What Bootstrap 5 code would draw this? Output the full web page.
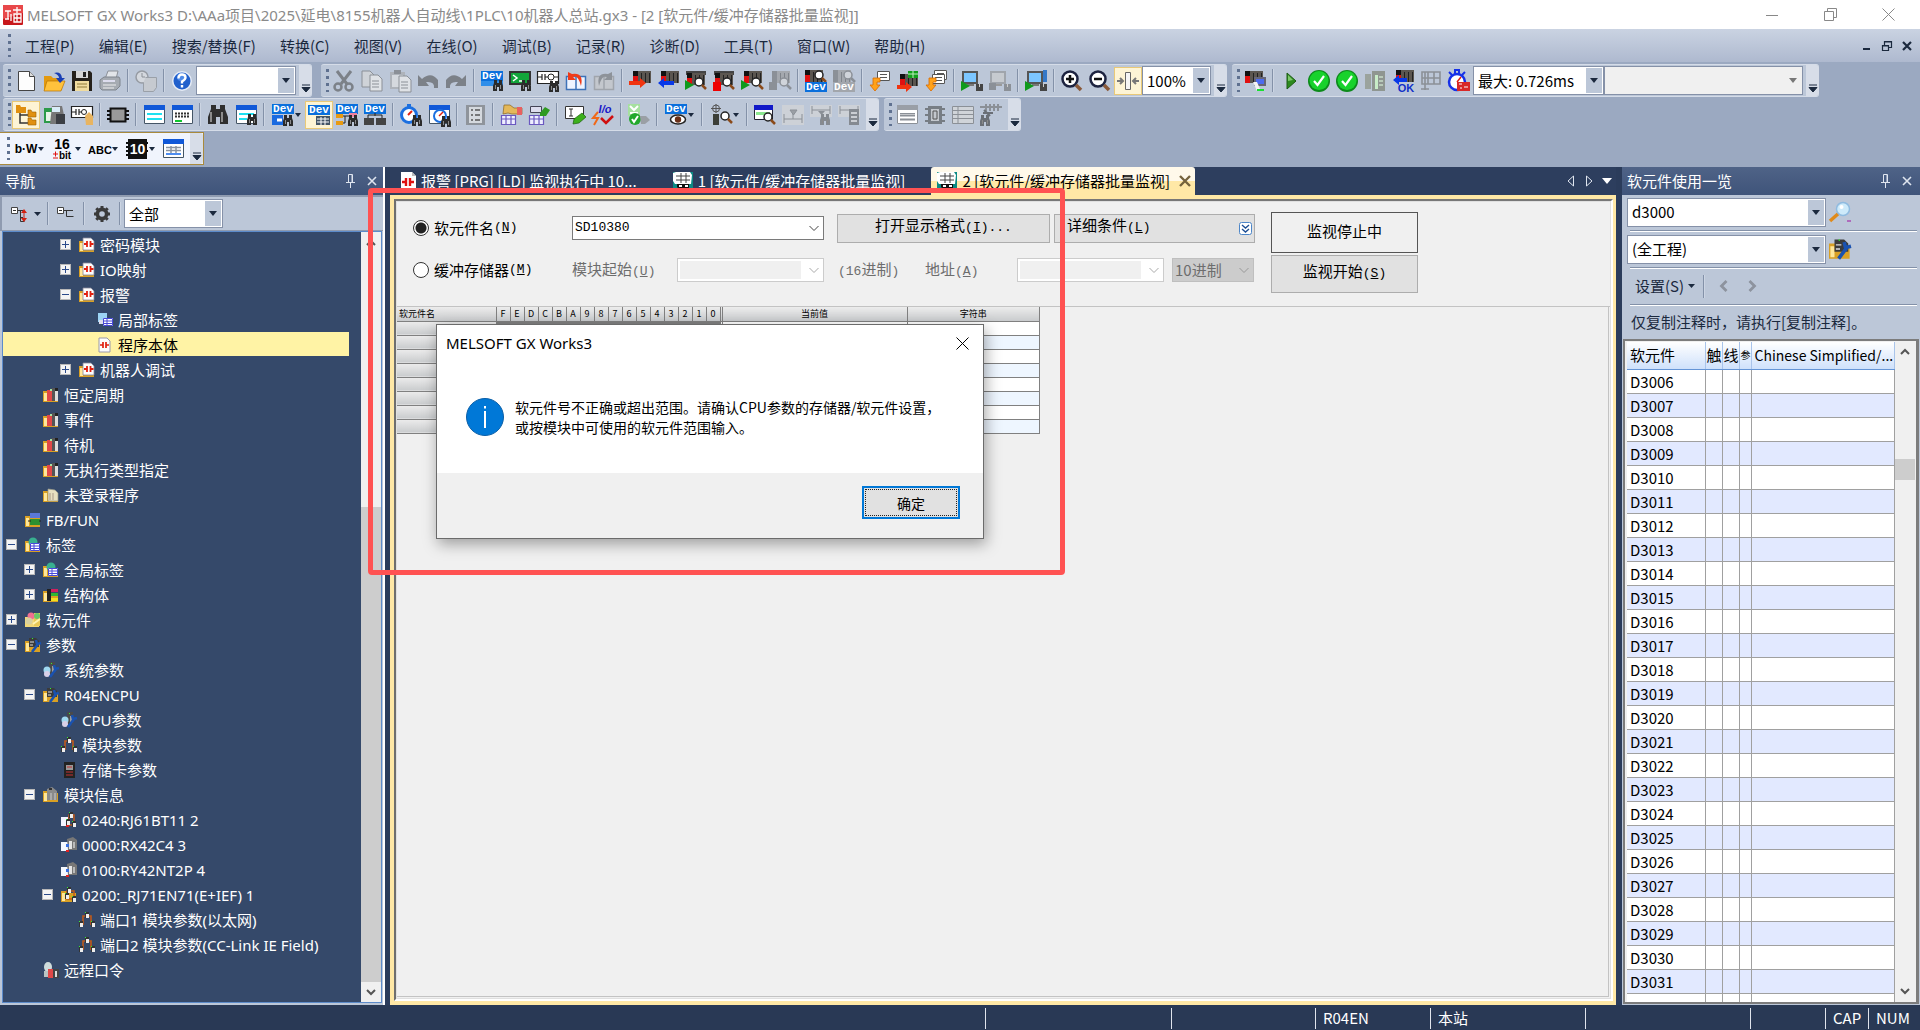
<!DOCTYPE html>
<html lang="zh-CN">
<head>
<meta charset="utf-8">
<meta name="viewport" content="width=device-width, initial-scale=1">
<title>MELSOFT GX Works3</title>
<link href="https://cdn.jsdelivr.net/npm/bootstrap@5.3.0/dist/css/bootstrap.min.css" rel="stylesheet">
<style>
:root{--bar:#bcc7d8;--desk:#9ba9c1;--navy:#2b3c5b;--tree:#35496a;--ink:#1b293e;--cream:#ffe8a6}
*{border-radius:0}
body{font-family:"Noto Sans CJK SC","Noto Sans",sans-serif;font-size:15px;line-height:20px;color:#000;background:var(--navy);height:100vh;overflow:hidden}
button,select,input{font:inherit;color:inherit}
button{border:0;background:none;padding:0}
svg{display:block;flex:none;overflow:visible}
.ui{font-family:"Noto Sans","Noto Sans CJK SC",sans-serif}
.mn{font-family:"Liberation Mono",monospace;font-size:13px}
.titlebar{height:29px;background:#fff;color:#8a8a8a;padding:0 3px}
.capbtn{width:58px;height:29px;display:flex;align-items:center;justify-content:center}
.menubar{height:34px;background:linear-gradient(#cad3e2,#aeb9cf);color:var(--ink);padding:0 3px 0 5px}
.menubar a{color:var(--ink);text-decoration:none;padding:0 12px;white-space:nowrap}
.mdibtn{width:20px;height:20px;display:flex;align-items:center;justify-content:center}
.grip{width:3px;height:23px;margin:0 1px 0 5px;flex:none;background:repeating-linear-gradient(#5f7190 0 3px,transparent 3px 7px)}
.menubar .grip{margin:0 2px 0 3px}
.bars{background:var(--desk);padding:2px 0}
.barrow{height:34px;padding-left:3px;gap:5px}
#row1 .tbar:first-child{margin-right:4px}
.tbar{display:flex;align-items:center;height:33px;background:var(--bar);border-top:1px solid #d5dce8;border-bottom:1px solid #d5dce8;border-radius:3px;color:var(--ink);flex:none}
.tbar.hot{background:#f0f4fd;border:1px solid #a98a3c;border-left:0;border-radius:0;padding-left:2px}
.tb{width:28px;height:28px;display:flex;align-items:center;justify-content:center;flex:none}
.tb.dd{width:37px;gap:1px}
.tb.on{background:#fdf4d5;border:1px solid #e9c978}
.sp{width:2px;height:23px;margin:0 3px;background:linear-gradient(90deg,#8391a8 1px,#ccd5e3 1px);flex:none}
.cap{width:13px;align-self:stretch;margin-left:3px;background:#d7dde8;border-radius:0 3px 3px 0;display:flex;align-items:flex-end;justify-content:center;padding-bottom:3px}
.cmb{display:flex;height:29px;border:1px solid #8591a8;background:#fff;color:#000;flex:none}
.cmb select{border:0;outline:0;appearance:none;background:transparent;flex:1 1 0;min-width:0;padding:0 4px;line-height:20px;opacity:1}
.cmb i{width:16px;margin:1px;background:var(--bar);display:flex;align-items:center;justify-content:center}
.cmb.off{background:#f0f0f0}.cmb.off i{background:none}
.w100{width:100px}.w70{width:69px}.w131{width:131px}.w199{width:199px}.w98{width:99px}
.work{background:var(--navy);min-height:0}
.phead{height:28px;background:linear-gradient(#4f6387,#3f547a);color:#fff;padding:0 2px 0 5px}
.navp .phead{padding-right:0}
.pbtn{width:22px;height:20px;display:flex;align-items:center;justify-content:center}
.tabs .pbtn{width:18px}
.navp{width:385px;flex:none;border-right:2px solid #fff;background:var(--bar)}
.navtool{height:36px;background:var(--bar);border:2px solid #8f9bb0;border-width:2px 0 1px 2px;padding-left:5px}
.treebox{border:1px solid #5c8bca;margin:0 1px 2px 2px;background:var(--tree);min-height:0}
.tree{margin:0;padding:0;list-style:none;color:#fff;overflow:hidden}
.tree li{height:25px;display:flex;align-items:center;white-space:nowrap;padding-left:3px}
.tree li.sel{background:linear-gradient(#fff3a5 24px,transparent 24px);color:#000;margin-right:12px}
.lv1{margin-left:18px}.lv2{margin-left:36px}.lv3{margin-left:54px}.lv4{margin-left:72px}
.exb{width:11px;height:11px;flex:none;margin-right:8px;background:#f4f4f4;border:1px solid #b8b8b8;display:flex;align-items:center;justify-content:center}
.exb.none{visibility:hidden}
.tree li>svg{margin-right:5px}
.vsb{width:20px;background:#f0f0f0;flex:none;display:flex;flex-direction:column;align-items:center}
.vsb button{width:20px;height:20px;display:flex;align-items:center;justify-content:center}
.thumbbar{width:20px;background:#cdcdcd}
.f254{flex:254}.f475{flex:475}.f98{flex:98}.f21{flex:21}.f498{flex:504}
.mdi{margin:0 6px 0 5px;min-width:0}
.tabs{height:28px;background:#2d3e5e;color:#fff;padding-left:7px}
.dtab{display:flex;align-items:center;height:28px;white-space:nowrap;color:#fff;text-decoration:none;gap:5px;overflow:hidden}
.tabgap{width:36px;flex:none}.tabgap.end{width:26px}
.dtab.cur{background:linear-gradient(#fff9ea 50%,#ffe8a6 50%);color:#000;border-radius:3px 3px 0 0;padding:0 4px 0 6px}
.frame{background:var(--cream);padding:4px 3px 4px 4px;min-height:0}
.inner{border:3px solid #6f6f6f;border-right-color:#fff;border-bottom-color:#fff;border-top-color:#777;background:#f0f0f0;min-height:0;outline:1px solid #e0e0e0;outline-offset:-3px}
.cond{height:105px;padding:10px 0 0 16px;border-bottom:1px solid #c3c3c3}
.crow{height:32px;display:flex;align-items:center}
.crow+.crow{margin-top:10px}
.rd{width:16px;height:16px;margin:0 5px 0 0;appearance:none;border:1px solid #333;border-radius:50%;background:#fff;flex:none}
.rd:checked{background:radial-gradient(circle,#222 0 5px,#fff 6px)}
.rlab{width:159px;display:flex;align-items:center;white-space:nowrap}
.wc{display:flex;height:24px;border:1px solid #7a7a7a;background:#fff;align-items:center;padding:0 4px 0 2px}
.wc select,.wc input{appearance:none;border:0;outline:0;background:transparent;flex:1 1 0;min-width:0;padding:0;height:20px;opacity:1}
.wc.dis{border-color:#ccc;width:147px}.wc.dis input{background:#f0f0f0;margin-right:8px;height:18px}
.wc.sel10{background:#ccc;border-color:#bfbfbf;color:#6d6d6d;width:82px}
.wname{width:252px}.wfmt{width:213px;margin-left:13px}.wdet{width:201px}.wunit{width:105px}.whex{width:87px;margin-left:14px}.waddr{width:92px}
.gray{color:#6d6d6d}
.wb{background:#e1e1e1;border:1px solid #adadad;height:29px;padding-bottom:3px}
.wb.wdet{padding:0 2px 0 12px}.wb.wdet>span{padding-bottom:3px}
.wb.big{height:38px}
.pair{gap:2px}
.wst{width:147px;height:41px;border:1px solid #555;background:#f0f0f0;display:flex;align-items:center;justify-content:center;padding-bottom:4px}
.gridarea{border-right:1px solid #c3c3c3;border-bottom:1px solid #c3c3c3;margin:0 1px 1px 0}
.dt{width:643px;table-layout:fixed;border-collapse:collapse;font-size:9px;line-height:12px}
.dt th,.dt td{height:14px;padding:0;border:1px solid #808080;border-top:0;text-align:center;font-weight:400}
.dt th,.dt td:first-child{background:linear-gradient(#ececec,#c9cbcd)}
.dt th:first-child{text-align:left;padding-left:2px}
.dt th:first-child,.dt td:first-child{border-left:0}
.dt td{background:#fff}
.dt tr:nth-child(even) td:not(:first-child){background:#eef6ff}
.dt tbody tr td.bit{background:#808080!important}
.c-name{width:99px}.c-bit{width:14px}.c-gap{width:2px}.c-val{width:185px}
.hl{position:absolute;left:368px;top:21px;width:697px;height:387px;border:5px solid #ff5252;border-radius:4px;pointer-events:none;z-index:5}
.msg{position:absolute;left:436px;top:157px;width:548px;background:#fff;border:1px solid #6b6b6b;box-shadow:2px 5px 14px rgba(0,0,0,.35);z-index:4}
.mhead{height:36px;padding:0 10px 0 9px}
.mbody{height:112px;padding:0 0 0 29px;gap:11px;font-size:14px}
.mfoot{height:65px;background:#f0f0f0;padding:13px 23px;font-size:14px}
.okb{width:98px;height:33px;background:#e1e1e1;border:2px solid #0078d7;outline:1px dotted #222;outline-offset:-4px}
.usep{width:298px;flex:none;background:var(--bar)}
.utop{padding:3px 2px 0 5px;color:var(--ink)}
.urow{height:29px;gap:3px}
.uset{height:29px;padding-left:8px}
.uset .sp{margin:0 14px 0 8px}
.uset .fw{margin-left:20px}
.unote{height:28px;line-height:26px;padding-left:4px;white-space:nowrap}
.ln{height:2px;margin:3px 1px 3px 3px;background:linear-gradient(#8391a8 1px,#fff 1px)}
.ulist{border:2px solid #7c7c7c;border-right-width:3px;margin:2px 1px 1px 1px;background:#f0f0f0;min-height:0;padding:1px 1px 0 2px;overflow:hidden}
.ut{table-layout:fixed;border-collapse:collapse;width:100%}
.ut th{height:28px;padding:0 0 0 1px;font-weight:400;background:linear-gradient(#fff,#cfe1fb);border-bottom:1px solid #6595d6;border-right:1px solid #a9c4ea;white-space:nowrap;overflow:hidden}
.ut th:first-child,.ut th:last-child{padding-left:3px}
.ut th:last-child{font-size:14px}
.ut td{height:24px;padding:0 0 0 3px;line-height:20px;border-right:1px solid #a0a0a0;border-bottom:1px solid #a0a0a0;background:#fff}
.ut tr:nth-child(even) td{background:#e2e9ff}
.c-dev{width:78px}.c-s{width:17px}.c-t{width:12px}
.ut th:nth-child(4){font-size:10px}
.status{height:25px;background:#293955;color:#fff;flex:none;padding:3px 0 1px}
.status div{border-left:1px solid #e0e4ec;padding-left:7px;flex:none;white-space:nowrap}
.status .rest{flex:1 1 0;border:0}
.s1{width:186px}.s2{width:144px}.s3{width:115px}.s4{width:155px}.s5{width:165px}.s6{width:75px}.s7{width:43px}.s8{width:52px}
</style>
<script src="https://cdn.jsdelivr.net/npm/bootstrap@5.3.0/dist/js/bootstrap.bundle.min.js"></script>
</head>
<body class="d-flex flex-column">

<header class="titlebar ui d-flex align-items-center">
  <svg width="20" height="20" viewBox="0 0 20 20" class="me-1"><rect width="20" height="20" rx="1" fill="#c8181c"/><path d="M0 0h20v8L0 14z" fill="#e8484a"/><path d="M2 6h6M5 6v8M2 14h4M8 9v7M10 5h8M14 2v6M11 9h7v8h-7zM11 13h7M14 9v8" stroke="#fff" stroke-width="1.3" fill="none"/></svg>
  <span class="flex-grow-1 text-nowrap overflow-hidden">MELSOFT GX Works3 D:\AAa项目\2025\延电\8155机器人自动线\1PLC\10机器人总站.gx3 - [2 [软元件/缓冲存储器批量监视]]</span>
  <button class="capbtn" aria-label="最小化"><svg width="12" height="12"><path d="M0 6.500h12" stroke="#888"/></svg></button>
  <button class="capbtn" aria-label="还原"><svg width="13" height="13" fill="none" stroke="#888"><path d="M.5 3.500h9v9h-9zM3.500 3.500v-3h9v9h-3"/></svg></button>
  <button class="capbtn" aria-label="关闭"><svg width="13" height="13"><path d="M.5.5l12 12M12.500.5l-12 12" stroke="#888"/></svg></button>
</header>

<nav class="menubar d-flex align-items-center">
  <span class="grip"></span>
  <a href="#">工程(P)</a><a href="#">编辑(E)</a><a href="#">搜索/替换(F)</a><a href="#">转换(C)</a><a href="#">视图(V)</a><a href="#">在线(O)</a><a href="#">调试(B)</a><a href="#">记录(R)</a><a href="#">诊断(D)</a><a href="#">工具(T)</a><a href="#">窗口(W)</a><a href="#">帮助(H)</a>
  <span class="flex-grow-1"></span>
  <button class="mdibtn" aria-label="最小化窗口"><svg width="10" height="10"><path d="M1 8h7" stroke="#1b293e" stroke-width="2"/></svg></button>
  <button class="mdibtn" aria-label="还原窗口"><svg width="10" height="10" fill="none" stroke="#1b293e"><path d="M.5 4.500h6v5h-6zM0 5h7M2.500 4V.5h7v6h-3M2 1h8" stroke-width="1.200"/></svg></button>
  <button class="mdibtn" aria-label="关闭窗口"><svg width="10" height="10"><path d="M1 1l8 8M9 1L1 9" stroke="#1b293e" stroke-width="2.200"/></svg></button>
</nav>

<section class="bars" aria-label="工具栏">
  <div class="barrow d-flex" id="row1"></div>
  <div class="barrow d-flex" id="row2"></div>
  <div class="d-flex" id="row3"></div>
</section>

<main class="work d-flex flex-grow-1 position-relative">
  <aside class="navp d-flex flex-column">
    <div class="phead d-flex align-items-center"><span class="flex-grow-1">导航</span><button class="pbtn" aria-label="固定"><svg width="9" height="14" fill="none" stroke="#dfe5ef"><path d="M2.500 8V.5h4V8M6 1v7M0 8.500h9M4.500 9v5"/></svg></button><button class="pbtn" aria-label="关闭导航"><svg width="10" height="10"><path d="M1 1l8 8M9 1L1 9" stroke="#dfe5ef" stroke-width="1.600"/></svg></button></div>
    <div class="navtool d-flex align-items-center">
      <button class="tb dd" aria-label="展开"><svg width="18" height="18" fill="none"><path d="M.5 2.500h6v6h-6z" fill="#fff" stroke="#444"/><path d="M2 5.500h3M7 5.500h5M9.500 5.500v11h4M10 12.500h2" stroke="#333"/><path d="M13 4l3 4h-6zM13 17l3-4h-6zM12.500 8h1v5h-1z" fill="#d22010"/></svg><svg class="ms-1" width="7" height="4"><path d="M0 0h7L3.500 4z" fill="#1b293e"/></svg></button>
      <span class="sp"></span>
      <button class="tb" aria-label="折叠"><svg width="18" height="14" fill="none"><path d="M.5 .5h6v6h-6z" fill="#fff" stroke="#444"/><path d="M2 3.500h3M7 3.500h9M9.500 3.500v6h7" stroke="#333"/></svg></button>
      <span class="sp"></span>
      <button class="tb" aria-label="设置"><svg width="18" height="18" viewBox="0 0 18 18"><circle cx="9" cy="9" r="4.500" fill="none" stroke="#3a3a3a" stroke-width="4"/><path d="M9 1v16M1 9h16M3.300 3.300l11.400 11.400M14.700 3.300L3.300 14.700" stroke="#3a3a3a" stroke-width="3"/><circle cx="9" cy="9" r="2.800" fill="#bcc7d8"/></svg></button>
      <span class="sp"></span>
      <span class="cmb w98"><select aria-label="显示对象"><option>全部</option></select><i><svg width="8" height="5"><path d="M0 0h8L4 5z" fill="#1b293e"/></svg></i></span>
    </div>
    <div class="treebox d-flex flex-grow-1">
      <ul class="tree ui flex-grow-1" id="tree"></ul>
      <div class="vsb"><button aria-label="向上"><svg width="10" height="7" fill="none" stroke="#555" stroke-width="2"><path d="M1 6l4-4 4 4"/></svg></button><div class="f254"></div><div class="thumbbar f475"></div><button aria-label="向下"><svg width="10" height="7" fill="none" stroke="#555" stroke-width="2"><path d="M1 1l4 4 4-4"/></svg></button></div>
    </div>
  </aside>

  <section class="mdi d-flex flex-column flex-grow-1">
    <div class="tabs d-flex align-items-center">
      <a href="#" class="dtab ps-1"><svg width="15" height="18" viewBox="0 0 15 18"><path d="M0 0h11l4 4v14H0z" fill="#fff"/><path d="M1 10h4M5 6v8M9 6v8M9 10h4" stroke="#e01010" stroke-width="2.400" fill="none"/><path d="M11 0v4h4" fill="#bbb"/></svg>报警 [PRG] [LD] 监视执行中 10...</a>
      <span class="tabgap"></span>
      <a href="#" class="dtab"><svg width="20" height="18" data-mon></svg>1 [软元件/缓冲存储器批量监视]</a>
      <span class="tabgap end"></span>
      <a href="#" class="dtab cur"><svg width="20" height="18" data-mon></svg>2 [软元件/缓冲存储器批量监视]<svg class="ms-1" width="12" height="12"><path d="M1 1l10 10M11 1L1 11" stroke="#75633d" stroke-width="2.400"/></svg></a>
      <span class="flex-grow-1"></span>
      <button class="pbtn" aria-label="上一个"><svg width="8" height="12" fill="none" stroke="#dfe5ef"><path d="M6.500 1v10L1 6z"/></svg></button><button class="pbtn" aria-label="下一个"><svg width="8" height="12" fill="none" stroke="#dfe5ef"><path d="M1.500 1v10L7 6z"/></svg></button><button class="pbtn" aria-label="窗口列表"><svg width="10" height="6"><path d="M0 0h10L5 6z" fill="#fff"/></svg></button>
    </div>
    <div class="frame d-flex flex-column flex-grow-1">
      <div class="inner d-flex flex-column flex-grow-1">
        <form class="cond d-flex">
          <div>
            <div class="crow">
              <label class="rlab"><input class="rd" type="radio" name="kind" checked>软元件名<span class="mn">(<u>N</u>)</span></label>
              <span class="wc mn wname"><select aria-label="软元件名"><option>SD10380</option></select><svg width="10" height="7" fill="none" stroke="#444"><path d="M.5 1L5 5.500 9.500 1"/></svg></span>
              <button type="button" class="wb wfmt">打开显示格式<span class="mn">(<u>I</u>)...</span></button>
              <button type="button" class="wb wdet ms-1 d-flex align-items-center justify-content-between"><span>详细条件<span class="mn">(<u>L</u>)</span></span><svg width="13" height="13" viewBox="0 0 13 13"><rect x=".5" y=".5" width="12" height="12" rx="2" fill="#fff" stroke="#4d86c8"/><path d="M3 3l3.500 3L10 3M3 7l3.500 3L10 7" fill="none" stroke="#1e4f94" stroke-width="1.400"/></svg></button>
            </div>
            <div class="crow">
              <label class="rlab"><input class="rd" type="radio" name="kind">缓冲存储器<span class="mn">(<u>M</u>)</span></label>
              <label for="unit" class="gray wunit">模块起始<span class="mn">(<u>U</u>)</span></label>
              <span class="wc dis"><input id="unit" disabled><svg width="10" height="7" fill="none" stroke="#aaa"><path d="M.5 1L5 5.500 9.500 1"/></svg></span>
              <span class="gray whex"><span class="mn">(16</span>进制<span class="mn">)</span></span>
              <label for="addr" class="gray waddr">地址<span class="mn">(<u>A</u>)</span></label>
              <span class="wc dis"><input id="addr" disabled><svg width="10" height="7" fill="none" stroke="#aaa"><path d="M.5 1L5 5.500 9.500 1"/></svg></span>
              <span class="wc sel10 ms-2"><select aria-label="进制" disabled><option>10进制</option></select><svg width="10" height="7" fill="none" stroke="#999"><path d="M.5 1L5 5.500 9.500 1"/></svg></span>
            </div>
          </div>
          <div class="pair d-flex flex-column ms-3">
            <output class="wst">监视停止中</output>
            <button type="button" class="wb big">监视开始<span class="mn">(<u>S</u>)</span></button>
          </div>
        </form>
        <div class="gridarea flex-grow-1"><table class="dt"><colgroup id="dcols"></colgroup><thead><tr id="dhead"></tr></thead><tbody id="dbody"></tbody></table></div>
      </div>
    </div>
  </section>

  <aside class="usep d-flex flex-column">
    <div class="phead d-flex align-items-center"><span class="flex-grow-1">软元件使用一览</span><button class="pbtn" aria-label="固定"><svg width="9" height="14" fill="none" stroke="#dfe5ef"><path d="M2.500 8V.5h4V8M6 1v7M0 8.500h9M4.500 9v5"/></svg></button><button class="pbtn" aria-label="关闭一览"><svg width="10" height="10"><path d="M1 1l8 8M9 1L1 9" stroke="#dfe5ef" stroke-width="1.600"/></svg></button></div>
    <div class="utop">
      <div class="urow d-flex align-items-center"><span class="cmb w199"><select aria-label="软元件"><option>d3000</option></select><i><svg width="8" height="5"><path d="M0 0h8L4 5z" fill="#1b293e"/></svg></i></span><button aria-label="搜索"><svg width="22" height="22" viewBox="0 0 22 22"><path d="M1 20l9-8" stroke="#e08a1a" stroke-width="3.500"/><circle cx="14" cy="8" r="6.500" fill="#cdeafa" stroke="#8fbbe0" stroke-width="1.500"/><circle cx="12.500" cy="6" r="2" fill="#fff"/><path d="M18 20h4" stroke="#a010a0"/></svg></button></div>
      <div class="ln"></div>
      <div class="urow d-flex align-items-center"><span class="cmb w199"><select aria-label="范围"><option>(全工程)</option></select><i><svg width="8" height="5"><path d="M0 0h8L4 5z" fill="#1b293e"/></svg></i></span><button aria-label="工程"><svg width="22" height="22" viewBox="0 0 16 16" data-t="fparam"></svg></button></div>
      <div class="ln"></div>
      <div class="uset d-flex align-items-center"><button class="d-flex align-items-center gap-1">设置(S)<svg width="7" height="4"><path d="M0 0h7L3.500 4z" fill="#1b293e"/></svg></button><span class="sp"></span><button aria-label="后退"><svg width="9" height="12" fill="none" stroke="#8d939e" stroke-width="2.800"><path d="M7.500 1L2.500 6l5 5"/></svg></button><button class="fw" aria-label="前进"><svg width="9" height="12" fill="none" stroke="#8d939e" stroke-width="2.800"><path d="M1.500 1l5 5-5 5"/></svg></button></div>
      <div class="ln"></div>
      <div class="unote">仅复制注释时，请执行[复制注释]。</div>
    </div>
    <div class="ulist d-flex flex-grow-1">
      <div class="flex-grow-1 overflow-hidden"><table class="ut"><colgroup><col class="c-dev"><col class="c-s"><col class="c-s"><col class="c-t"><col></colgroup><thead><tr><th>软元件</th><th>触</th><th>线</th><th>参</th><th>Chinese Simplified/...</th></tr></thead><tbody id="ubody"></tbody></table></div>
      <div class="vsb"><button aria-label="向上滚动"><svg width="10" height="7" fill="none" stroke="#555" stroke-width="2"><path d="M1 6l4-4 4 4"/></svg></button><div class="f98"></div><div class="thumbbar f21"></div><div class="f498"></div><button aria-label="向下滚动"><svg width="10" height="7" fill="none" stroke="#555" stroke-width="2"><path d="M1 1l4 4 4-4"/></svg></button></div>
    </div>
  </aside>

  <div class="msg" role="dialog" aria-label="MELSOFT GX Works3">
    <div class="mhead ui d-flex align-items-center justify-content-between">MELSOFT GX Works3<button class="p-1" aria-label="关闭对话框"><svg width="13" height="13"><path d="M.5.5l12 12M12.500.5l-12 12" stroke="#000"/></svg></button></div>
    <div class="mbody d-flex align-items-center"><svg width="38" height="38" viewBox="0 0 38 38"><circle cx="19" cy="19" r="18.500" fill="#0078d7" stroke="#0a5fa8"/><path d="M19 13v17M19 8v2.500" stroke="#fff" stroke-width="2"/></svg><div class="text-nowrap">软元件号不正确或超出范围。请确认CPU参数的存储器/软元件设置，<br>或按模块中可使用的软元件范围输入。</div></div>
    <div class="mfoot d-flex justify-content-end"><button class="okb">确定</button></div>
  </div>
  <div class="hl"></div>
</main>

<footer class="status d-flex">
  <div class="rest"></div><div class="s1"></div><div class="s2"></div><div class="s3">R04EN</div><div class="s4">本站</div><div class="s5"></div><div class="s6"></div><div class="s7">CAP</div><div class="s8">NUM</div>
</footer>

<script>
// Icon parts, shared between toolbar pictures
const r=(x,y,w,h,f)=>`<rect x="${x}" y="${y}" width="${w}" height="${h}" fill="${f}"/>`;
const p=(d,f,s,w=1)=>`<path d="${d}" fill="${f||'none'}"${s?` stroke="${s}" stroke-width="${w}"`:''}/>`;
const bino=(x,y,c='#2b2b2b')=>p(`M${x+1} ${y}h3v3h2v-3h3v3l1 3v5h-4v-4h-2v4h-4v-5l1-3z`,c)+p(`M${x+2.5} ${y+5}v4M${x+7.5} ${y+5}v4`,0,'#8a8a8a');
const dev=(y,c='#0a6fdc')=>r(0,y,22,10,c)+`<text x="11" y="${y+8}" font-size="11" font-weight="700" font-family="Liberation Mono" text-anchor="middle" fill="#fff">Dev</text>`;
const plc=(g,x=4,y=1)=>r(x,y,18,12,g?'#a4a8ae':'#5b5650')+r(x,y,5,5,g?'#8b9097':'#111')+r(x,y+5,5,7,g?'#8b9097':'#e01010')+r(x+8,y+2,1,10,g?'#7f848b':'#222')+r(x+12,y+2,1,10,g?'#7f848b':'#222')+r(x+16,y+2,1,10,g?'#7f848b':'#222');
const mag=(x,y,g)=>`<circle cx="${x}" cy="${y}" r="4" fill="${g?'#d0d4da':'#fff'}" stroke="${g?'#8b9097':'#222'}" stroke-width="1.5"/>`+p(`M${x+3} ${y+3}l4 4`,0,g?'#8b9097':'#8a4a1a',2.5);
const play=(x,y,g)=>p(`M${x} ${y}l9 5-9 5z`,g?'#8b9097':'#0f9a1c');
const sheet=(x,y,g)=>r(x,y,13,10,g?'#c3c7cc':'#fff')+p(`M${x+.5} ${y+.5}h12v9h-12zM${x+3} ${y+3.500}h7M${x+3} ${y+6.500}h7`,0,g?'#8b9097':'#555');
const down=(x,y)=>p(`M${x+9} ${y}h-7v7h-3l5 6 5-6h-3v-3h3z`,'#ffa21a','#d86a00',.8);
const win=(h,lines)=>r(1,1,21,19,'#fff')+p('M1.500 1.500h20v18h-20z',0,h==='g'?'#8b9097':'#456')+r(1,1,21,5,h==='g'?'#9a9fa7':'#1058d8')+lines;
const pc=(g,x=1)=>r(x,1,16,13,g?'#a0a5ac':'#555')+r(x+2,3,12,9,g?'#c6cacf':'#7cc6ff')+r(x+5,14,7,2,g?'#999':'#777')+r(15,14,7,7,g?'#8b9097':'#444')+p('M18.500 14v3',0,'#ccc');
const doc=(x,y,f='#fff',s='#444')=>p(`M${x} ${y}h8l4 4v12h-12z`,f,s);
const G='#8b9097';
const I={
new:p('M3.500 1.500h11l5 5v14h-16z','#fdfdfd','#444')+p('M14.500 1.500v5h5','#ddd','#444'),
open:p('M1 6h7l2 2h9v12H1z','#e39a10')+p('M4 11h18l-4 10H1z','#ffc23c','#b87400',.7)+p('M11 3q7-2 8 5h3l-5 5-4-5h3q0-3-5-5z','#1a3fb4'),
save:p('M1 1h18l2 2v18H1z','#26221c')+r(5,1,12,7,'#d6d6d6')+r(12,2,3,5,'#222')+r(4,11,14,10,'#f0dca0')+p('M6 14h10M6 17h10',0,'#8f7a3a'),
print:p('M6 9l3-8h10l-2 8','#e2e5e9',G)+p('M1 10l4-3h15l1 2v7l-4 4H3l-2-2z','#a6abb2','#7f858d')+p('M4 15h13M4 18h11',0,'#eee')+r(4,10,12,2,'#dde'),
hist:`<circle cx="7" cy="7" r="6" fill="#d4d8de" stroke="#969ba3" stroke-width="1.500"/>`+p('M7 3v4h3',0,G)+p('M10.500 7.500h11v10l-3 4h-10v-9','#c6cad0','#9aa0a8'),
help:'<circle cx="11" cy="11" r="10" fill="#e6ecf6"/><circle cx="11" cy="11" r="8.500" fill="#2160cc"/><circle cx="10" cy="7" r="4" fill="#4f8be8"/>'+p('M7.500 8.500q0-4 3.500-4t3.500 3q0 2-3.500 4v2M11 15v2.500',0,'#fff',2.4),
cut:p('M4 1l10 13M18 1L8 14',0,'#7c8188',3)+`<circle cx="5" cy="17" r="3.500" fill="none" stroke="#7c8188" stroke-width="2.500"/><circle cx="16" cy="17" r="3.500" fill="none" stroke="#7c8188" stroke-width="2.500"/>`,
copy:doc(1,1,'#cfd3d8',G)+doc(9,5,'#dfe2e6',G)+p('M11 11h7M11 14h7M11 17h7',0,G),
paste:r(1,2,15,17,'#aeb3ba')+r(3,5,11,12,'#d5d9de')+r(5,0,7,4,G)+doc(10,6,'#dfe2e6',G)+p('M12 12h7M12 15h7M12 18h7',0,G),
undo:p('M1 5l4 4q9-8 16 1v8h-4q1-7-8-6l3 4H1z','#7c8188'),
redo:p('M21 5l-4 4q-9-8-16 1v8h4q-1-7 8-6l-3 4h11z','#7c8188'),
devf:r(0,1,22,15,'#2f8eea')+dev(1)+bino(12,10),
grnf:r(0,1,22,14,'#333')+r(2,3,18,10,'#12a53a')+p('M4 5l4 3-4 3M10 11h5',0,'#fff',1.5)+bino(12,10),
ladf:r(0,1,22,13,'#fff')+p('M.5 1.500h21v12H.5zM1 7h4M5 4v6M8 4v6M8 7h3M17 7h4',0,'#222',1.2)+'<circle cx="14" cy="7" r="3" fill="none" stroke="#222"/>'+bino(12,11),
bkr:r(1,6,20,14,'#eef4ff')+p('M1.500 6.500h19v13h-19zM11 6v14',0,'#3d72b8',1.5)+p('M3 2v8h8l-3-3q5-3 8 9 3-14-9-12z','#f03a18'),
bkg:r(1,6,20,14,'#c3c7cd')+p('M1.500 6.500h19v13h-19zM11 6v14',0,'#a0a5ac',1.5)+p('M19 2v8h-8l3-3q-5-3-8 9-3-14 9-12z','#8d9299'),
wr:plc(0)+p('M0 11h11V8l6 5-6 5v-3H0z','#f03410'),
rd:plc(0)+p('M17 11H7V8l-6 5 6 5v-3h10z','#0838e8'),
mpl:r(1,1,20,4,'#444')+plc(0,2,3)+play(0,10)+mag(14,12),
mst:r(1,1,20,4,'#444')+plc(0,2,3)+r(0,12,8,9,'#e00')+mag(14,12),
mp2:plc(0,3)+play(0,10)+mag(15,12),
mg2:plc(1,3)+r(0,12,8,8,G)+mag(15,12,1),
pdev:plc(0,0,0)+mag(14,5)+dev(12),
pdevg:plc(1,0,0)+mag(15,5,1)+dev(12,'#a2a6ac'),
sh1:sheet(8,1)+down(2,8),
plcg:plc(0,3,4)+p('M11 1h10v7H11z','#11a01c')+p('M16 1v7M11 4h10',0,'#bfeebf')+p('M0 15h9v-3l6 5-6 5v-3H0z','#f03410'),
sh2:sheet(9,0)+sheet(7,4)+down(2,8),
pcp:pc(0)+play(0,11),
pcg:pc(1)+r(0,13,7,7,G),
pcp2:r(18,0,4,12,'#3478c8')+pc(0,2)+play(0,11),
zin:'<circle cx="9" cy="9" r="7.500" fill="#fff" stroke="#1d2340" stroke-width="2.500"/>'+p('M5 9h8M9 5v8',0,'#111',2.5)+p('M15 15l5 5',0,'#8a5a3a',3.5),
zout:'<circle cx="9" cy="9" r="7.500" fill="#fff" stroke="#1d2340" stroke-width="2.500"/>'+p('M5 9h8',0,'#111',2.5)+p('M15 15l5 5',0,'#8a5a3a',3.5),
fit:p('M8.500 2.500h5v17h-5z','#f5f5f5','#666')+p('M0 11h6M3 8l3 3-3 3M22 11h-6M19 8l-3 3 3 3',0,'#777',2),
sim:plc(0,1)+r(10,7,12,9,'#667')+r(12,9,8,5,'#4d6cf0')+p('M9 12l4 9 3-2-3-7z','#f4f4f4')+r(13,19,7,2,'#18e030'),
play:p('M7 3l9 8-9 8z','#2c8a1e','#1c5a14')+p('M8 5l5 5-5 1z','#7cc86a'),
ok:'<circle cx="11" cy="11" r="11" fill="#0d8a1b"/><circle cx="11" cy="10.500" r="9.500" fill="#18d22c"/>'+p('M6 11l3.500 4L16 6',0,'#fff',2.2),
panel:r(1,4,6,15,'#9ba39d')+r(8,1,13,20,'#8f9691')+r(11,5,3,14,'#c8ecc8')+p('M15 7h4M15 11h4M15 15h4',0,'#e4ffe4'),
pok:plc(0,4,0)+p('M15 8H7V5L1 10l6 5v-3h8z','#0838e8')+'<text x="14" y="22" font-size="11" font-weight="700" font-family="Liberation Sans" text-anchor="middle" fill="#1030c8">OK</text>',
sch:p('M2 2h18v12H2zM5 2v18M8 2v12M14 2v12M2 8h18M1 19h8',0,G,1.6),
clk:'<circle cx="9" cy="12" r="8" fill="#fff" stroke="#1530e8" stroke-width="2.500"/>'+p('M7 0h4v4H7zM1 2l3 3M17 2l-3 3',0,'#1530e8',2)+p('M9 12l4-5',0,'#e02010',1.5)+r(9,12,13,9,'#d82828')+p('M11 14h3M16 17h4M12 18h2',0,'#fff'),
tree:p('M1 1h4l1 2h5v6H1z','#e09010')+p('M5 9v10h8M5 11h8',0,'#333',1.5)+p('M13 6h3l1 2h4v5h-8zM13 14h3l1 2h4v5h-8z','#e09010','#9c5f00',.6),
prt:r(1,4,12,15,'#2c9a4a')+r(3,8,7,9,'#e8f4e8')+p('M9 2h10l2 9-5 9H7z','#777')+r(9,3,8,5,'#d8ecf8')+r(13,10,9,10,'#3c3f44'),
ladh:r(0,2,22,11,'#fff')+p('M.5 2.500h21v11H.5zM1 8h4M5 5v6M8 5v6M8 8h3',0,'#222',1.2)+'<circle cx="13" cy="8" r="2.500" fill="none" stroke="#222"/>'+p('M14 12l4-4 4 4v9h-7z','#e8b460'),
chip:r(4,5,14,13,'#999')+p('M3.500 4.500h15v13h-15z',0,'#111',2)+p('M0 7h3M0 11h3M0 15h3M19 7h3M19 11h3M19 15h3',0,'#111',2),
w1:win('b',p('M4 10h15M4 15h15',0,'#1ee0f0',2)),
w2:win('b',p('M4 9.500h15M4 12.500h15',0,'#333',2).replace('/>',' stroke-dasharray="2 1"/>')+p('M4 17h7',0,'#10c830',2)),
bin:p('M4 1h5v4h4V1h5v4l3 8v7h-8v-7H9v7H1v-7l3-8z','#2f2f2f')+p('M4 8v10M15 8v10',0,'#8c8c8c',2),
w1f:win('b',p('M4 10h15M4 15h8',0,'#1ee0f0',2))+bino(12,10),
devb:dev(0)+r(0,11,11,10,'#1a6ae0')+p('M5 16h5',0,'#fff',3)+bino(11,11),
devt:dev(1)+r(8,12,14,9,'#456')+p('M9 15h12M9 18h12M13 13v8M17 13v8',0,'#fff'),
devn:dev(0)+r(0,10,7,4,'#e89a10')+r(0,17,7,4,'#e89a10')+p('M7 12h6M9 12v7H7',0,'#222')+r(13,9,8,4,'#f080a0')+bino(12,11),
devg:dev(0)+p('M11 9v3M4 14v-3h14v3',0,'#222')+r(0,14,10,7,'#444')+r(12,14,10,7,'#444'),
clkf:'<circle cx="9" cy="11" r="7.500" fill="#fff" stroke="#1b6fe0" stroke-width="3"/>'+r(7,0,4,3,'#1b6fe0')+p('M8 11l4-4',0,'#e02010',2)+bino(12,11),
wclk:win('b','')+'<circle cx="12" cy="12" r="6" fill="#fff" stroke="#1b6fe0" stroke-width="2"/>'+p('M11 12l4-4',0,'#e02010',1.500)+bino(13,12),
list:r(2,1,19,20,'#8f949b')+r(5,3,13,16,'#d5d9de')+p('M7 6h2M11 6h5M7 11h2M11 11h5M7 16h2M11 16h5',0,'#555',1.5),
tw:r(1,11,15,10,'#eef')+p('M1.500 11.500h14v9h-14zM1 15h15M6 11v10M11 11v10',0,'#6a58c0',1.2)+p('M4 1h6l4 3h8v6H12L8 9l-5 1z','#e4b85a','#8a6420',.7)+r(17,3,5,8,'#e86060'),
tr:r(1,11,15,10,'#eef')+p('M1.500 11.500h14v9h-14zM1 15h15M6 11v10M11 11v10',0,'#6a58c0',1.2)+r(2,2,12,7,'#dde')+p('M2.500 2.500h11v6h-11z',0,'#445')+p('M12 9l5-6 5 3-4 6h-6z','#2f9a20'),
edt:r(1,2,18,12,'#fff')+p('M1.500 2.500h18v12h-18zM5 5h4M7 5v7M5 12h4',0,'#333')+p('M9 20l1-5 8-6 4 4-7 6z','#3cb01c','#1e6010',.7),
io:'<text x="13" y="9" font-size="11" font-weight="700" font-style="italic" font-family="Liberation Sans" text-anchor="middle" fill="#1818c8">I/o</text>'+p('M6 8l-5 6h5l-4 7',0,'#f06818',2)+p('M9 14l5 5 7-7',0,'#d01010',2.5),
gch:r(0,0,12,12,'#a6e0a0')+p('M2 2l4 4 4-4M2 9h8',0,'#fff',2)+'<circle cx="7" cy="15" r="6" fill="#22a82c"/>'+p('M4 15l2 3 4-6',0,'#fff',2)+p('M12 12h6l4 4-5 4h-4z','#9a9fa5'),
eye:dev(0)+'<ellipse cx="13" cy="15.500" rx="7.500" ry="4.500" fill="#fff" stroke="#222" stroke-width="1.500"/><circle cx="13" cy="15.500" r="3.200" fill="#6a3018"/>',
tgt:'<circle cx="6" cy="4.500" r="3.500" fill="none" stroke="#555"/>'+p('M1 4.500h10M6 0v9',0,'#555')+r(3,10,6,11,'#3c3f38')+mag(15,12),
wmag:r(0,1,19,15,'#fff')+p('M.5 1.500h18v14H.5z',0,'#223')+r(0,1,19,5,'#1018c8')+r(2,8,14,3,'#8ce890')+mag(14,13),
ga:r(0,1,22,20,'#cdd1d7')+p('M2 10v9M20 10v9M2 15h18M11 10v5M8 6h7l-3.500 5z','#9a9fa5',G),
gb:r(0,1,22,12,'#cdd1d7')+p('M2 2v8M20 2v8M2 6h18',0,G)+p('M8 7h7l-3.500 4z',G)+bino(10,10,'#858a91'),
gc:r(0,1,22,12,'#cdd1d7')+p('M2 2v8M20 2v8M2 6h18',0,G)+r(11,5,10,16,'#858a91')+p('M13 9h6M13 13h6M13 17h6',0,'#e2e5e9',1.5),
gw:win('g',p('M4 9.500h15',0,G,1)+p('M4 11.500h15M4 15.500h15',0,G,2)),
gchip:r(4,2,14,18,'#777d84')+r(7,5,8,12,'#c3c7cd')+p('M9 7h4v8H9z',0,'#555')+p('M1 5h3M1 11h3M1 17h3M18 5h3M18 11h3M18 17h3',0,'#777d84',2),
glist:r(0,2,22,18,'#d0d4d9')+p('M.5 2.500h21v17H.5zM0 6.500h22M0 10.500h22M0 14.500h22M6 2v18',0,G),
gf:p('M0 3h22M6 0v7M10 0v7M14 0v7M18 0v7',0,G,2)+p('M3 9h10M4 6l6 6',0,'#6a6f76',2)+bino(0,11,'#6a6f76'),
bw:'<text x="11" y="15" font-size="12" font-weight="700" font-family="Liberation Sans" text-anchor="middle">b·W</text>',
b16:'<text x="10" y="11" font-size="14" font-weight="700" font-family="Liberation Sans" text-anchor="middle">16</text><text x="13" y="21" font-size="10" font-weight="700" font-family="Liberation Sans" text-anchor="middle">bit</text>'+p('M1 16h5M3.500 13.500v5M1 20h5',0,'#e01010'),
abc:'<text x="11" y="16" font-size="11" font-weight="700" font-family="Liberation Sans" text-anchor="middle">ABC</text>',
t10:r(2,1,19,20,'#111')+p('M0 5h2M0 9h2M0 13h2M0 17h2M21 5h1M21 13h1',0,'#111',2)+'<text x="11.500" y="16" font-size="14" font-weight="700" font-family="Liberation Sans" text-anchor="middle" fill="#fff">10</text>',
wt:win('b',p('M4 9.500h15M4 12.500h15M9 8v9M14 8v9',0,'#8a93a0',1.5)+p('M4 16h15',0,'#4d8cf0',2))
};
const svg=k=>`<svg width="22" height="22" viewBox="0 0 22 22">${I[k]}</svg>`;
const arr=(c='#1b293e')=>`<svg width="8" height="5"><path d="M0 0h8L4 5z" fill="${c}"/></svg>`;
const capEnd='<span class="cap"><svg width="8" height="9"><path d="M0 1h8M0 3.500h8L4 8z" stroke="#1b293e" fill="#1b293e" stroke-width="1"/></svg></span>';
const cmb=(w,t,l,off='')=>`<span class="cmb ${w} ${off}"><select aria-label="${l}" ${off?'disabled':''}><option>${t}</option></select><i>${arr(off?'#777':'#1b293e')}</i></span>`;
// "|" is a separator, "+" a pressed button, ":v" a button with a drop-down; markup passes through
const bar=(s,cls='')=>`<div class="tbar ${cls}"><span class="grip"></span>`+s.map(k=>{
  if(k==='|')return '<span class="sp"></span>';
  if(k[0]==='<')return k;
  const on=k[0]==='+',dd=k.endsWith(':v');k=k.replace('+','').replace(':v','');
  return `<button class="tb${on?' on':''}${dd?' dd':''}" aria-label="${k}">${svg(k)}${dd?'<svg width="6" height="4"><path d="M0 0h6L3 4z" fill="#1b293e"/></svg>':''}</button>`}).join('')+capEnd+'</div>';
row1.innerHTML=bar(['new','open','save','print','|','hist','|','help',cmb('w100','','搜索内容')])
 +bar(['cut','copy','paste','undo','redo','|','devf','grnf','ladf','bkr','bkg','|','wr','rd','mpl','mst','mp2','mg2','|','pdev','pdevg','|','sh1','plcg','sh2','|','pcp','pcg','|','pcp2','|','zin','zout','+fit',cmb('w70','100%','缩放')])
 +bar(['sim','|','play','ok','ok','panel','pok','sch','clk',cmb('w131','最大: 0.726ms','扫描时间'),cmb('w199','','对象','off')]);
row2.innerHTML=bar(['+tree','prt','ladh','|','chip','|','w1','w2','|','bin','w1f','|','devb:v','+devt','devn','devg','|','clkf','wclk','|','list','|','tw','tr','|','edt','io','|','gch','|','eye:v','|','tgt:v','|','wmag','ga','gb','gc'])
 +bar(['gw','gchip','glist','gf']);
row3.innerHTML=bar(['bw:v','b16:v','abc:v','t10:v','wt'],'hot');

// Project tree
const fold=p('M0 4h5l1 2h9v9H0z','#d9a024')+p('M1 6h3v8H1z','#ffe79a');
const ladd=(x)=>p(`M${x} 1h8l3 3v9h-11z`,'#fdfdfd','#889',.8)+p(`M${x+1} 7h2.500M${x+4} 4v6M${x+7.500} 4v6M${x+8} 7h2.500`,0,'#e02010',1.8);
const mod=(x,y,c='#333')=>r(x,y,4,6,c)+r(x+1,y+2,3,4,'#eee')+r(x,y,1,1,'#3e3');
const tri=p('M8 4h4v9M8 4H4v9',0,'#c05a1a',1.6)+mod(6,0)+mod(0,9)+mod(12,9);
const wrench=p('M7 15l6-8M11 3l1 4 4-1',0,'#1a52b0',2.600);
const tbl=(x,y)=>r(x,y,10,8,'#fff')+p(`M${x+.5} ${y+.5}h9v7h-9zM${x} ${y+3}h10M${x} ${y+5.500}h10M${x+4} ${y}v8`,0,'#4848d8');
const T={fl:fold+ladd(4),lbl:r(1,1,9,9,'#9cd4f4')+r(2,8,5,4,'#dde')+tbl(6,6),pg:p('M2 1h8l3 3v11H2z','#fdfdfd','#99a')+p('M3 8h3M6 5v6M9 5v6M9 8h3',0,'#e02010',1.7),
prg:fold+r(4,3,5,11,'#e04848')+r(9,1,3,13,'#555')+r(12,1,3,13,'#ddd')+r(12,1,3,3,'#222')+r(7,2,2,2,'#a8e0a0'),
un:fold+p('M5 2l7 1 3 3v8H5z','#e8e0c0','#998',.7)+p('M7 6v7M10 6v7',0,'#a98'),
fb:fold+r(5,1,10,5,'#5a78d8')+r(5,7,10,6,'#2c9030')+p('M3 9h3M14 9h2',0,'#222'),
tag:fold+'<circle cx="8" cy="5" r="4.500" fill="#38b090"/>'+tbl(5,6),str:fold+r(4,2,4,12,'#222')+r(8,2,7,3,'#d02060')+r(8,6,7,3,'#30b830')+r(8,11,7,3,'#f0e020'),
dv:r(0,5,14,10,'#f2d878')+r(9,1,6,13,'#e8c858')+'<circle cx="6" cy="4" r="3.500" fill="#f07090"/><circle cx="12" cy="4" r="3" fill="#68c868"/><circle cx="4" cy="9" r="3.500" fill="#d8d0a0"/>'+p('M8 12l7-5',0,'#fff3b0',2),
fparam:fold+p('M4 1h7l3 3v6H4z','#3b3b3b')+p('M5 5h4M5 8h3',0,'#ddd')+r(7,1,1,1,'#3e3')+wrench,
sys:r(6,0,6,12,'#4a4a4a')+r(8,1,1,1,'#3e3')+p('M10 4v7',0,'#bbb',1.500)+'<circle cx="4" cy="8" r="3.500" fill="#a0d8f0"/><circle cx="4" cy="12" r="3" fill="#d8d0e8"/>'+wrench,
tri,card:r(3,0,11,16,'#222')+r(5,3,7,5,'#999')+p('M6 5h5M5 10h7M5 13h7',0,'#c03030'),
fm:fold+p('M4 2l5-2 5 4v9H4z','#8a8a8a')+p('M8 6v7M12 6v7',0,'#ccc')+r(6,1,3,2,'#333'),
mi:r(0,5,7,9,'#f4f4ff')+p('M8 3h5v10H8z',0,'#c05a1a',1.500)+mod(8,0)+mod(5,7)+mod(11,9)+r(5,13,3,2,'#e02020'),
mb:r(0,5,7,9,'#f4f8ff')+p('M6 2l6-2 4 3v10H7z','#777')+p('M8 4h3v8H8z','#e4e4e4')+r(12,5,2,6,'#bbb')+r(5,7,3,3,'#3870e0')+r(5,13,3,2,'#e02020'),
fn:fold+p('M6 4h7v8H6z',0,'#c05a1a',1.5)+mod(6,0)+mod(4,6)+mod(11,9),
key:'<ellipse cx="5" cy="5" rx="4" ry="5" fill="#cfdcdc"/>'+r(1,9,5,6,'#b8c4c4')+r(5,7,5,9,'#e04848')+r(10,7,6,9,'#444')+r(12,9,2,6,'#ddd')};
[[3,'+','fl','密码模块'],[3,'+','fl','IO映射'],[3,'-','fl','报警'],[4,'','lbl','局部标签'],[4,'','pg','程序本体',1],[3,'+','fl','机器人调试'],[1,'','prg','恒定周期'],[1,'','prg','事件'],[1,'','prg','待机'],[1,'','prg','无执行类型指定'],[1,'','un','未登录程序'],[0,'','fb','FB/FUN'],[0,'-','tag','标签'],[1,'+','tag','全局标签'],[1,'+','str','结构体'],[0,'+','dv','软元件'],[0,'-','fparam','参数'],[1,'','sys','系统参数'],[1,'-','fparam','R04ENCPU'],[2,'','sys','CPU参数'],[2,'','tri','模块参数'],[2,'','card','存储卡参数'],[1,'-','fm','模块信息'],[2,'','mi','0240:RJ61BT11 2'],[2,'','mb','0000:RX42C4 3'],[2,'','mb','0100:RY42NT2P 4'],[2,'-','fn','0200:_RJ71EN71(E+IEF) 1'],[3,'','tri','端口1 模块参数(以太网)'],[3,'','tri','端口2 模块参数(CC-Link IE Field)'],[1,'','key','远程口令']]
.forEach(([n,e,k,t,s])=>tree.insertAdjacentHTML('beforeend',`<li class="${s?'sel':''}"><span class="exb lv${n} ${e?'':'none'}"><svg width="9" height="9"><path d="M1 4.500h7${e==='+'?'M4.500 1v7':''}" stroke="#2a4a8a"/></svg></span><svg width="16" height="16" viewBox="0 0 16 16">${T[k]}</svg>${t}</li>`));
document.querySelectorAll('[data-t]').forEach(s=>s.innerHTML=T[s.dataset.t]);
document.querySelectorAll('[data-mon]').forEach(s=>s.innerHTML=r(0,0,20,18,'#0b8a84')+p('M0 1l3-1h14l2 3-1 9H2L0 9z','#fff')+p('M3 4h14M3 8h14M8 1v10M13 1v10',0,'#444')+p('M4 12h12v4l-3 2H7l-3-3z','#111')+r(6,13,3,2,'#fff')+r(12,13,3,2,'#fff')+r(8,16,4,1,'#fff'));

// Monitor grid
const bits=[...'FEDCBA9876543210'];
dcols.innerHTML='<col class="c-name">'+'<col class="c-bit">'.repeat(16)+'<col class="c-gap"><col class="c-val"><col>';
dhead.innerHTML='<th>软元件名</th>'+bits.map(b=>`<th>${b}</th>`).join('')+'<th></th><th>当前值</th><th>字符串</th>';
dbody.innerHTML=('<tr><td></td>'+'<td class="bit"></td>'.repeat(16)+'<td></td><td></td><td></td></tr>').repeat(8);
// Device usage list
for(let i=3006;i<=3031;i++)ubody.insertAdjacentHTML('beforeend',`<tr><td>D${i}</td><td></td><td></td><td></td><td></td></tr>`);
ubody.insertAdjacentHTML('beforeend','<tr><td></td><td></td><td></td><td></td><td></td></tr>');
</script>
</body>
</html>
